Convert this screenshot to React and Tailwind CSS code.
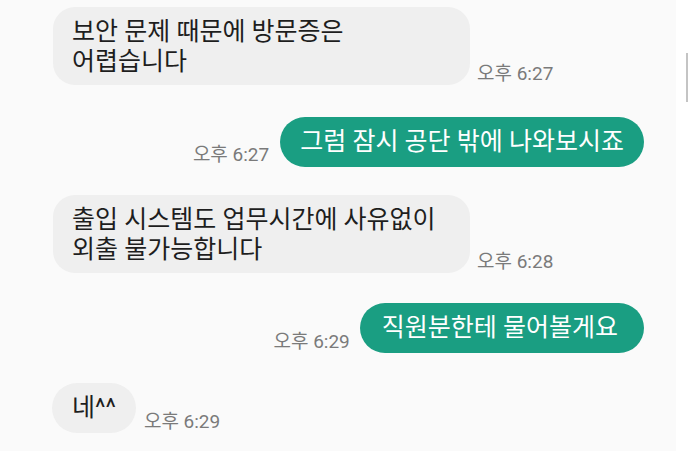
export default function App() {
  const font = { fontFamily: '"Roboto", "Noto Sans CJK KR", sans-serif' }
  return (
    <div className="relative w-[689px] h-[451px] bg-white overflow-hidden" style={font}>
      <div className="w-[676px] h-full bg-[#fafafa] pt-[7px]">
        <div className="flex items-end gap-[7px] pl-[53px]">
          <div className="w-[417px] rounded-[22px] bg-[#efefef] pl-[19px] pr-4 pt-[10px] pb-[8px] text-[25px] leading-[30px] text-[#1e1e1e]">
            보안 문제 때문에 방문증은<br />어렵습니다
          </div>
          <span className="text-[19px] leading-[22px] text-[#7a7a7a]">오후 6:27</span>
        </div>

        <div className="flex items-end justify-end gap-[11px] pr-[32px] mt-[32px]">
          <span className="text-[19px] leading-[22px] mb-[1px] text-[#7a7a7a]">오후 6:27</span>
          <div className="h-[50px] flex items-center rounded-full bg-[#1a9e82] px-5 text-[25px] leading-[30px] text-white">
            그럼 잠시 공단 밖에 나와보시죠
          </div>
        </div>

        <div className="flex items-end gap-[7px] pl-[53px] mt-[28px]">
          <div className="w-[417px] rounded-[22px] bg-[#efefef] pl-[19px] pr-4 pt-[10px] pb-[8px] text-[25px] leading-[30px] text-[#1e1e1e]">
            출입 시스템도 업무시간에 사유없이<br />외출 불가능합니다
          </div>
          <span className="text-[19px] leading-[22px] text-[#7a7a7a]">오후 6:28</span>
        </div>

        <div className="flex items-end justify-end gap-[10px] pr-[32px] mt-[30px]">
          <span className="text-[19px] leading-[22px] text-[#7a7a7a]">오후 6:29</span>
          <div className="h-[50px] flex items-center rounded-full bg-[#1a9e82] pl-[22px] pr-[26px] text-[25px] leading-[30px] text-white">
            직원분한테 물어볼게요
          </div>
        </div>

        <div className="flex items-end gap-[8px] pl-[52px] mt-[30px]">
          <div className="h-[50px] flex items-center rounded-full bg-[#efefef] px-5 text-[25px] leading-[30px] text-[#1e1e1e]">
            네^^
          </div>
          <span className="text-[19px] leading-[22px] text-[#7a7a7a]">오후 6:29</span>
        </div>
      </div>
      <div className="absolute right-[1px] top-[53px] w-[2px] h-[49px] bg-[#c4c4c4]" />
    </div>
  )
}
